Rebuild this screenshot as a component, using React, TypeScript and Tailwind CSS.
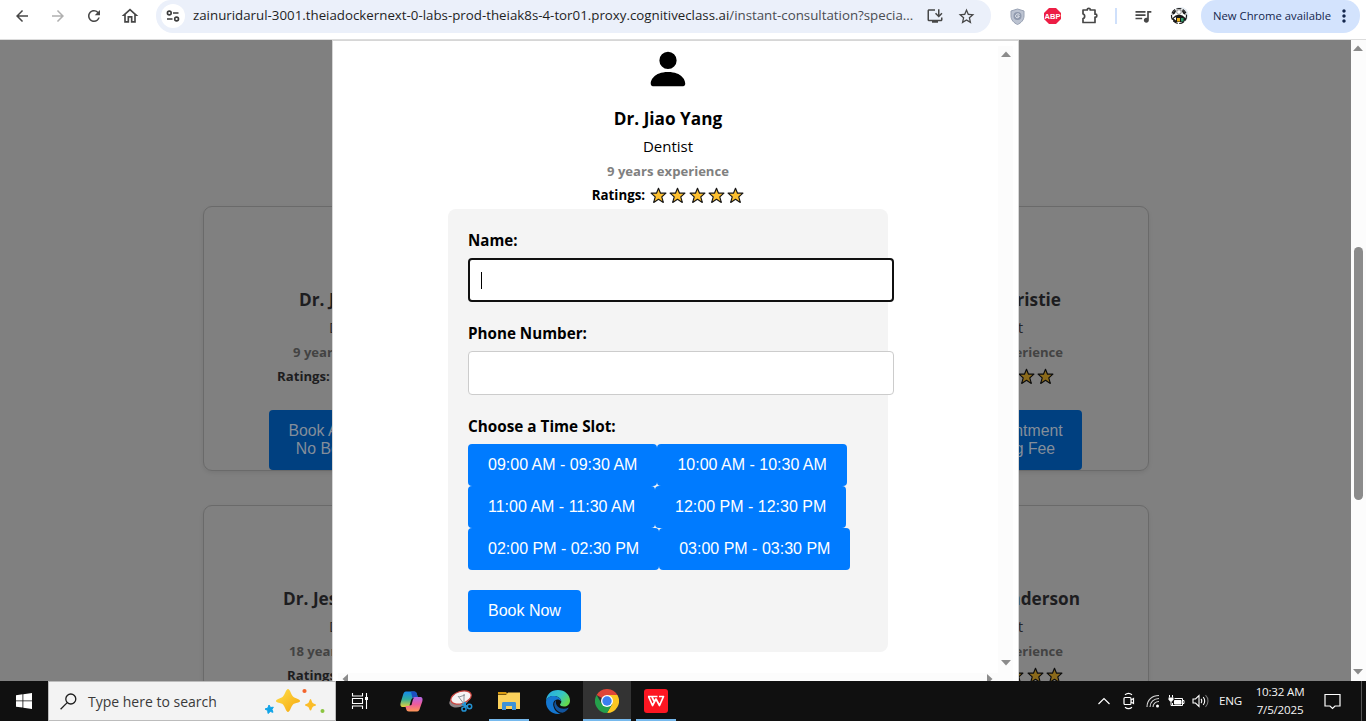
import React from 'react';
import {
  MdArrowBack,
  MdArrowForward,
  MdRefresh,
  MdOutlineHome,
  MdStarBorder,
  MdOutlineInstallDesktop,
  MdQueueMusic,
  MdMoreVert,
} from 'react-icons/md';
import { BsPersonFill } from 'react-icons/bs';

const Star = () => (
  <svg width="17" height="17" viewBox="0 0 16 16" className="block">
    <path
      d="M8 1.2 9.900 5.800h5.100l-3.900 3.500 1.400 5.200L8 11.600l-4.500 2.900 1.400-5.200L1 5.800h5.100z"
      fill="#fdc02f"
      stroke="#151515"
      strokeWidth="1.1"
      strokeLinejoin="round"
    />
  </svg>
);

const Stars = ({ count = 5 }: { count?: number }) => (
  <span className="flex gap-[2.3px]">
    {Array.from({ length: count }, (_, i) => (
      <Star key={i} />
    ))}
  </span>
);

const Arrow = ({ dir }: { dir: 'up' | 'down' | 'left' | 'right' }) => {
  const d = {
    up: 'M0 6 5 0.5 10 6z',
    down: 'M0 0 5 5.5 10 0z',
    left: 'M6 0 0.5 5 6 10z',
    right: 'M0 0 5.5 5 0 10z',
  }[dir];
  const tall = dir === 'left' || dir === 'right';
  return (
    <svg width={tall ? 6 : 10} height={tall ? 10 : 6} className="block shrink-0">
      <path d={d} fill="#8b8b8b" />
    </svg>
  );
};

const Toolbar = () => (
  <header className="flex h-10 shrink-0 items-start border-b border-[#dcdcdc] bg-white text-[#474747]">
    <div className="flex h-8 w-[156px] shrink-0 items-center pl-[13px]">
      <MdArrowBack size={18} />
      <MdArrowForward size={18} className="ml-[18px] text-[#b0b0b0]" />
      <MdRefresh size={18} className="ml-[18px]" />
      <MdOutlineHome size={20} className="ml-[17px]" />
    </div>
    <div className="flex h-[33px] w-[835px] shrink-0 items-center rounded-b-[17px] rounded-t-[15px] bg-[#ebf0fa] pb-px">
      <div className="ml-[5px] flex h-6 w-6 items-center justify-center rounded-full bg-white">
        <svg width="14" height="12" viewBox="0 0 14 12" fill="none" stroke="#3c3c3c" strokeWidth="1.6">
          <circle cx="3.3" cy="3" r="1.9" />
          <path d="M7 3h5.5M1 9h5.500" />
          <circle cx="10.600" cy="9" r="1.9" />
        </svg>
      </div>
      <span className="ml-2 w-[722px] whitespace-nowrap text-[13.300px] text-[#4a4d52]">
        <span className="text-[#1f1f1f]">zainuridarul-3001.theiadockernext-0-labs-prod-theiak8s-4-tor01.proxy.cognitiveclass.ai</span>
        /instant-consultation?specia...
      </span>
      <MdOutlineInstallDesktop size={18} className="ml-[11px]" />
      <MdStarBorder size={19} className="ml-[13px]" />
    </div>
    <div className="flex h-8 flex-1 items-center pl-[19px]">
      <svg width="15" height="17" viewBox="0 0 15 17" className="shrink-0">
        <path d="M7.500 1 14 3v5c0 4-3 7-6.500 8.500C4 15 1 12 1 8V3z" fill="#bcc3d1" stroke="#98a1b3" />
        <circle cx="7.500" cy="8" r="4" fill="#8f99ad" />
        <path d="M9.500 6.500c-2-1.500-4.500.2-3.800 2.200.8 1.800 3.600 1 3.500-.7H7.300" fill="none" stroke="#eef0f5" />
      </svg>
      <svg width="17" height="16" viewBox="0 0 17 16" className="ml-[19px] shrink-0">
        <path d="M5 0h7l5 5v6l-5 5H5l-5-5V5z" fill="#ed1e45" />
        <text x="8.500" y="11" textAnchor="middle" fontSize="7.500" fontWeight="700" fill="#fff" fontFamily="Liberation Sans, sans-serif">
          ABP
        </text>
      </svg>
      <svg width="18" height="18" viewBox="0 0 18 18" className="ml-5 shrink-0" fill="none" stroke="#474747" strokeWidth="1.7">
        <path d="M2 3h4.300V2.200c0-1 2.900-1 2.900 0V3H14v4.200h.7c1.500 0 1.500 3 0 3H14V15.500H2v-4c2.200-.2 2.200-4.300 0-4.500z" strokeLinejoin="round" />
      </svg>
      <span className="ml-[16px] h-4 w-0.5 shrink-0 bg-[#cfe0fb]" />
      <MdQueueMusic size={20} className="ml-[16px] shrink-0" />
      <svg width="20" height="18" viewBox="0 0 20 18" className="ml-[16px] shrink-0">
        <circle cx="11.500" cy="8" r="8" fill="#e6ecf2" />
        <circle cx="10" cy="9" r="7.500" fill="#fff" stroke="#1a1a1a" strokeWidth="1.200" strokeDasharray="5 1.500" />
        <path d="M4 5.500C5 4 6.500 3 7.500 3L6 6.500 3.500 8zM16 5.500C15 4 13.500 3 12.500 3L14 6.500 16.500 8z" fill="#191919" />
        <path d="M3 11.500 6.500 8.500 10 7.500l3.500 1 3.500 3-2 3.500H5z" fill="#191919" />
        <path d="M4.500 11.500 7 10v3.500z" fill="#fff" />
        <circle cx="10" cy="5" r="2.300" fill="#fff" stroke="#777" strokeWidth=".8" />
        <path d="M8 11h3v3.500H8z" fill="#f0b51e" />
        <path d="M12 11h2.500v3.500H12z" fill="#2f9e6b" />
      </svg>
      <div className="ml-[12px] flex h-[33px] w-[159px] shrink-0 items-center self-start rounded-b-[17px] rounded-t-[15px] bg-[#d3e3fd] pb-px pl-3 text-[#13264d]">
        <span className="w-[119px] whitespace-nowrap text-[11.300px]">New Chrome available</span>
        <MdMoreVert size={20} className="ml-[2px] shrink-0" />
      </div>
    </div>
  </header>
);

type Doctor = {
  name: string;
  experience: string;
  namePad: string;
  specPad: string;
  expPad: string;
};

const leftDoctors: Doctor[] = [
  { name: 'Dr. Jiao Yang', experience: '9 years experience', namePad: 'pl-[95px]', specPad: 'pl-[125px]', expPad: 'pl-[89px]' },
  { name: 'Dr. Jessica', experience: '18 years experience', namePad: 'pl-[79px]', specPad: 'pl-[125px]', expPad: 'pl-[85px]' },
];
const rightDoctors: Doctor[] = [
  { name: 'Christie', experience: 'experience', namePad: 'pr-[87px]', specPad: 'pr-[125px]', expPad: 'pr-[85px]' },
  { name: 'Anderson', experience: 'experience', namePad: 'pr-[68px]', specPad: 'pr-[125px]', expPad: 'pr-[85px]' },
];

const DoctorCard = ({
  doctor,
  side,
  ratingPad,
  bookable,
}: {
  doctor: Doctor;
  side: 'left' | 'right';
  ratingPad: string;
  bookable: boolean;
}) => (
  <article
    className={`flex h-[265px] w-[299px] flex-col whitespace-nowrap rounded-[9px] border border-[#6a6a6a] pt-[80px] shadow-[0_2px_4px_rgba(0,0,0,0.08)] ${
      side === 'left' ? 'items-start' : 'items-end'
    }`}
  >
    <h3 className={`h-[26px] text-[17.200px] font-bold leading-[26px] text-[#1d1d20] ${doctor.namePad}`}>{doctor.name}</h3>
    <p className={`h-[27px] text-[15px] leading-[28px] text-[#26262a] ${doctor.specPad}`}>Dentist</p>
    <p className={`h-6 text-[13.100px] font-bold leading-6 text-[#434343] ${doctor.expPad}`}>{doctor.experience}</p>
    <p className={`flex h-[25px] items-center gap-[5px] text-[13.200px] font-bold text-[#1d1d20] ${ratingPad}`}>
      {side === 'left' && 'Ratings:'}
      {side === 'right' && (
        <span className="brightness-[0.55]">
          <Stars count={3} />
        </span>
      )}
    </p>
    {bookable && (
      <div
        className={`mt-[21px] flex h-[60px] w-[167px] shrink-0 items-center justify-center rounded-[4px] bg-[#004080] text-center font-['Liberation_Sans',Arial,sans-serif] text-[15.800px] leading-[18px] text-[#848e9a] ${
          side === 'left' ? 'ml-[65px]' : 'mr-[66px]'
        }`}
      >
        Book Appointment
        <br />
        No Booking Fee
      </div>
    )}
  </article>
);

const PageBehind = () => (
  <div className="flex h-full">
    <div className="flex w-[1351px] justify-between overflow-hidden bg-[#808080] pl-[203px] pr-[202px] pt-[166px]">
      <div className="flex flex-col gap-[34px]">
        {leftDoctors.map((d, i) => (
          <DoctorCard key={d.name} doctor={d} side="left" bookable={i === 0} ratingPad={i ? 'pl-[83px]' : 'pl-[73px]'} />
        ))}
      </div>
      <div className="flex flex-col gap-[34px]">
        {rightDoctors.map((d, i) => (
          <DoctorCard key={d.name} doctor={d} side="right" bookable={i === 0} ratingPad={i ? 'pr-[85px]' : 'pr-[94px]'} />
        ))}
      </div>
    </div>
    <div className="flex w-[15px] flex-col items-start bg-[#fcfcfc] pl-[2px] pt-[5px]">
      <Arrow dir="up" />
      <div className="ml-px mt-[196px] h-[253px] w-[9px] rounded-full bg-[#8b8b8b]" />
      <div className="mt-[169px]">
        <Arrow dir="down" />
      </div>
    </div>
  </div>
);

const slots = [
  ['09:00 AM - 09:30 AM', '10:00 AM - 10:30 AM'],
  ['11:00 AM - 11:30 AM', '12:00 PM - 12:30 PM'],
  ['02:00 PM - 02:30 PM', '03:00 PM - 03:30 PM'],
];

const BlueButton = ({ children }: { children: React.ReactNode }) => (
  <button
    type="button"
    className="h-[42px] whitespace-nowrap rounded-[4px] bg-[#007bff] px-5 font-['Liberation_Sans',Arial,sans-serif] text-[16px] text-white"
  >
    {children}
  </button>
);

const BookingModal = () => (
  <section className="absolute left-[332px] top-0 flex h-[641px] w-[687px] flex-col border-x border-t border-[#d6d6d6] bg-white px-[5px] pt-[5px] text-black">
    <div className="flex min-h-0 flex-1">
      <div className="flex w-[660px] flex-col items-center">
        <BsPersonFill size={46} className="shrink-0" />
        <h2 className="mt-[14px] h-[26px] text-[17.200px] font-bold leading-[26px]">Dr. Jiao Yang</h2>
        <p className="h-[26px] text-[15px] leading-[28px]">Dentist</p>
        <p className="h-[25px] text-[13.100px] font-bold leading-[26px] text-[#808080]">9 years experience</p>
        <div className="flex h-6 items-center gap-[5px] text-[13.300px] font-bold">
          <span className="pt-px">Ratings:</span> <Stars />
        </div>
        <form className="mt-[2px] flex h-[443px] w-[440px] shrink-0 flex-col items-start rounded-[8px] bg-[#f4f4f4] px-5 pt-[20px]">
          <label className="h-[29px] text-[15.100px] font-bold leading-[22px]">Name:</label>
          <div className="flex h-11 w-[426px] shrink-0 items-center rounded-[4px] border-2 border-[#101010] bg-white pl-[11px]">
            <span className="h-[17px] w-px bg-black" />
          </div>
          <label className="mt-5 h-[29px] text-[15.200px] font-bold leading-[22px]">Phone Number:</label>
          <div className="h-11 w-[426px] shrink-0 rounded-[4px] border border-[#cccccc] bg-white" />
          <label className="mt-5 h-[29px] text-[15.300px] font-bold leading-[22px]">Choose a Time Slot:</label>
          <div className="flex flex-col">
            {slots.map(([a, b]) => (
              <div key={a} className="flex">
                <BlueButton>{a}</BlueButton>
                <BlueButton>{b}</BlueButton>
              </div>
            ))}
          </div>
          <div className="mt-5">
            <BlueButton>Book Now</BlueButton>
          </div>
        </form>
      </div>
      <div className="flex w-[15px] flex-col items-start justify-between bg-[#fcfcfc] pb-[7px] pl-[2.500px] pt-[5px]">
        <Arrow dir="up" />
        <Arrow dir="down" />
      </div>
    </div>
    <div className="flex h-2 shrink-0 items-start justify-between overflow-hidden bg-[#fcfcfc] pl-[4px] pr-[20px] pt-[1px]">
      <Arrow dir="left" />
      <Arrow dir="right" />
    </div>
  </section>
);

const Sparkles = () => (
  <svg width="62" height="28" viewBox="0 0 62 28" className="shrink-0">
    <defs>
      <linearGradient id="gold" x1="0" y1="0" x2="1" y2="1">
        <stop offset="0" stopColor="#ffe04a" />
        <stop offset="1" stopColor="#f5a60d" />
      </linearGradient>
    </defs>
    <path d="M24 2c2 0 3 5.500 5 7.500s7 2.500 7 4.500-5 1.500-7 3.500-3 7.500-5 7.500-3-5.500-5-7.500-7-1.500-7-3.500 5-2.500 7-4.500 3-7.500 5-7.500z" fill="url(#gold)" />
    <path d="M46.500 12c1 0 1.200 3 2.200 4s3.300.8 3.300 2-2.300.8-3.300 2-1.200 3.600-2.200 3.600-1.200-2.600-2.200-3.600-3.300-.8-3.300-2 2.300-1 3.300-2 1.200-4 2.200-4z" fill="#fbbd2a" />
    <path d="m5 18 1.500 2.500 2.800-.3L8 22.500l1 2.800-2.700-.8L4 26.500l-.3-3L1 22l2.900-1z" fill="#10a4e8" stroke="#10a4e8" strokeWidth="1" strokeLinejoin="round" />
    <circle cx="40.500" cy="4" r="2.100" fill="#f3642c" />
    <circle cx="58.500" cy="24" r="2" fill="#8bc540" />
  </svg>
);

const TaskIcons = () => (
  <nav className="flex h-full">
    <div className="flex w-[49px] items-center justify-center pb-px pr-px">
      <svg width="18" height="16" viewBox="0 0 18 16" fill="none" stroke="#fff" strokeWidth="1.100">
        <path d="M1.500 0v3h10V0M1.500 16v-3h10v3M1.500 5.500h10v5h-10zM15.500 0v16" />
        <rect x="14" y="4" width="3" height="3" fill="#fff" stroke="none" />
      </svg>
    </div>
    <div className="flex w-[52px] items-center justify-center">
      <svg width="23" height="21" viewBox="0 0 23 21">
        <defs>
          <linearGradient id="cpa" x1="0" y1="0" x2="0" y2="1">
            <stop offset="0" stopColor="#1389ee" />
            <stop offset=".5" stopColor="#31ad9a" />
            <stop offset="1" stopColor="#e6d13b" />
          </linearGradient>
          <linearGradient id="cpb" x1="0" y1="0" x2="0" y2="1">
            <stop offset="0" stopColor="#b169e8" />
            <stop offset=".5" stopColor="#ee5b9c" />
            <stop offset="1" stopColor="#ff9856" />
          </linearGradient>
        </defs>
        <path d="M6 .5h8c2 0 2.500 1 3 3l.7 2.500H15c-2 0-2.500 1-3 3l-1.300 4.500c-.5 2-1.500 2.500-3 2.500H3c-2.500 0-3-2-2.300-4.500L3 4C3.600 1.700 4.300.5 6 .5z" fill="url(#cpa)" />
        <path d="M11 .5h3c2 0 2.500 1 3 3l.7 2.500H15c-1.500 0-2 .5-2.500 1.500z" fill="#1c4fc0" />
        <path d="M17 20.500H9c-2 0-2.500-1-3-3L5.300 15H8c2 0 2.500-1 3-3l1.300-3.500C12.800 6.500 13.800 6 15.300 6H20c2.500 0 3 2 2.300 4.500L20 17c-.6 2.300-1.300 3.500-3 3.500z" fill="url(#cpb)" />
        <path d="M9.500 14.500 11 9.500c.5-1.700 1.500-2.700 3.500-2.700-1.500.5-1.500 2-3 7.200z" fill="#101010" />
      </svg>
    </div>
    <div className="flex w-[47px] items-center justify-center">
      <svg width="24" height="22" viewBox="0 0 24 22">
        <ellipse cx="10" cy="11" rx="10" ry="6" fill="#8f8587" transform="rotate(-18 10 11)" />
        <ellipse cx="12" cy="7.500" rx="10.500" ry="6" fill="#f6f4f4" stroke="#cf4640" strokeWidth="1.200" transform="rotate(-18 12 7.500)" />
        <path d="m9 6 6 8M15 4v10M10 7l6-2" stroke="#8e9398" strokeWidth="1" />
        <path d="m13 14 5 2.500M16 12v5" stroke="#2392d2" strokeWidth="2" />
        <circle cx="20.500" cy="16.500" r="2.200" fill="none" stroke="#2392d2" strokeWidth="1.500" />
        <circle cx="15" cy="19" r="2.100" fill="none" stroke="#2392d2" strokeWidth="1.500" />
      </svg>
    </div>
    <div className="flex w-[50px] flex-col items-center">
      <div className="flex flex-1 items-center">
        <svg width="22" height="18" viewBox="0 0 22 18" className="mt-[2px]">
          <path d="M0 0h8l2 2.500H0z" fill="#d99b11" />
          <path d="M0 3h8l2-2.500h12V17H0z" fill="#fbd15b" />
          <path d="M4 18v-6.500c0-1 .5-1.500 1.500-1.500h11c1 0 1.500.5 1.500 1.500V18h-4v-4H8v4z" fill="#3f92d6" />
        </svg>
      </div>
      <span className="h-0.5 w-10 bg-[#76b9ed]" />
    </div>
    <div className="flex w-[49px] items-center justify-center pr-[2px] pt-px">
      <svg width="24" height="24" viewBox="0 0 24 24">
        <defs>
          <linearGradient id="eg" x1="0" y1="0" x2="1" y2=".6">
            <stop offset="0" stopColor="#25a6e8" />
            <stop offset=".6" stopColor="#35c6c4" />
            <stop offset="1" stopColor="#64d94c" />
          </linearGradient>
        </defs>
        <path d="M0 12C0 4.500 5 0 12 0c7 0 12 5 12 10.500 0 4-3 6-6 6-2.500 0-4-1-4-2 0-.8 1.300-1 1.300-3C15.300 8.500 12 6 8 6 3 6 0 9 0 12z" fill="url(#eg)" />
        <path d="M0 12c0-3.500 3.500-6 7.500-6 4.500 0 7.800 2.500 7.800 5.500-1-1.500-2.500-2-4-2-3 0-4.500 3-4 6 .7 4.500 4 7.500 7.500 8.100C7 25.500 0 19.500 0 12z" fill="#1477d1" />
        <path d="M10 10c-4 4-1 12 6.500 12.800 3-.8 5-2.800 6.300-5.300C17 20.500 8.500 18 10 10z" fill="#12549d" />
      </svg>
    </div>
    <div className="flex w-12 flex-col items-center bg-[#333333]">
      <div className="flex flex-1 items-center pt-0.5">
        <svg width="24" height="24" viewBox="0 0 24 24">
          <path d="M12 12 1.600 6A12 12 0 0 1 22.400 6z" fill="#e04638" />
          <path d="M12 12V6h10.400A12 12 0 0 1 12 24l5.200-9z" fill="#fdc721" />
          <path d="M12 12l5.200 3L12 24A12 12 0 0 1 1.600 6l5.200 9z" fill="#25a04b" />
          <circle cx="12" cy="12" r="6" fill="#fff" />
          <circle cx="12" cy="12" r="4.700" fill="#3a7ff0" />
        </svg>
      </div>
      <span className="h-0.5 w-full bg-[#76b9ed]" />
    </div>
    <div className="ml-[5px] flex w-10 flex-col items-center">
      <div className="flex flex-1 items-center pt-0.5">
        <svg width="24" height="24" viewBox="0 0 24 24">
          <rect width="24" height="24" rx="3" fill="#fd1622" />
          <path d="M4 7.500h9.500M4.500 7.500l4 9 3.500-6.500 3.500 6.500L19.500 7.500H15M8 8l2 4" fill="none" stroke="#fff" strokeWidth="1.700" strokeLinejoin="round" />
        </svg>
      </div>
      <span className="h-0.5 w-full bg-[#76b9ed]" />
    </div>
  </nav>
);

const Tray = () => (
  <div className="ml-auto flex h-full items-center text-[#f4f4f4]">
    <svg width="12" height="8" viewBox="0 0 12 8" fill="none" stroke="#fff" strokeWidth="1.200">
      <path d="m.5 7 5.500-5.500L11.500 7" />
    </svg>
    <svg width="12" height="18" viewBox="0 0 12 18" className="ml-[13px]" fill="none" stroke="#fff" strokeWidth="1.200">
      <rect x="1" y="5.500" width="7" height="7" rx="1" />
      <path d="M8 8l2.500-1.500v5L8 10M2 2.800c2-1.600 5-1.600 7 0M2 15.200c2 1.600 5 1.600 7 0" />
    </svg>
    <svg width="14" height="14" viewBox="0 0 14 14" className="ml-[11px]" fill="none" stroke="#d8d8d8" strokeWidth="1.100">
      <path d="M1 13C1 6 6 1.500 13 1.500M4 13c0-5 4-8.500 9-8.500M7 13c0-3 2.500-5.500 6-5.500" />
      <circle cx="11.500" cy="12" r="1.500" fill="#fff" stroke="none" />
    </svg>
    <svg width="17" height="13" viewBox="0 0 17 13" className="ml-[8px]" fill="none" stroke="#fff" strokeWidth="1">
      <path d="M6.500 3.500h8v7h-10V8M14.500 5.500H16v3h-1.500M1.500 0v2.500M4.500 0v2.500M3 6v4.500h2" />
      <path d="M.5 2.500h5v2L4 6.500H2L.5 4.500z" fill="#fff" stroke="none" />
      <path d="M6.500 5.500h6.500v3.500H6.500z" fill="#fff" />
    </svg>
    <svg width="17" height="14" viewBox="0 0 17 14" className="ml-[7px]" fill="none" stroke="#fff" strokeWidth="1.100">
      <path d="M1 5h2.500L7 1.500v11L3.500 9H1zM9 5c1 1 1 3 0 4M11.200 3.200c2 2 2 5.600 0 7.600" />
      <path d="M13.500 1.200c3.300 3 3.300 8.600 0 11.600" stroke="#777" />
    </svg>
    <span className="ml-[10px] w-[24px] whitespace-nowrap text-[11.600px] tracking-[-0.2px]">ENG</span>
    <div className="ml-[8px] flex w-[58px] flex-col items-center whitespace-nowrap text-[11.600px] leading-[18px] tracking-[-0.2px]">
      <span>10:32 AM</span>
      <span>7/5/2025</span>
    </div>
    <svg width="17" height="17" viewBox="0 0 17 17" className="ml-[15px] mr-[20px]" fill="none" stroke="#fff" strokeWidth="1.200">
      <path d="M1 1.500h15v11.500h-5l-2.500 2.500L6 13H1z" />
    </svg>
    <span className="mr-[4px] h-full w-px bg-[#555]" />
  </div>
);

const Taskbar = () => (
  <footer className="flex h-10 shrink-0 bg-[#101010]">
    <div className="flex w-12 items-center justify-center">
      <svg width="16" height="16" viewBox="0 0 16 16" fill="#fff">
        <path d="M0 2.200 6.500 1.300v6.200H0zM7.300 1.200 16 0v7.500H7.300zM0 8.300h6.500v6.300L0 13.700zM7.300 8.300H16V16l-8.700-1.200z" />
      </svg>
    </div>
    <div className="flex w-[288px] items-center border border-[#bcbcbc] bg-[#f3f3f3] pl-[11px]">
      <svg width="17" height="17" viewBox="0 0 17 17" fill="none" stroke="#1d1d1d" strokeWidth="1.300">
        <circle cx="10.800" cy="6" r="5" />
        <path d="M7.200 9.600.6 16.200" />
      </svg>
      <span className="ml-[11px] w-[176px] whitespace-nowrap pt-px text-[14px] text-[#3a3a3a]">Type here to search</span>
      <Sparkles />
    </div>
    <TaskIcons />
    <Tray />
  </footer>
);

export default function App() {
  return (
    <div className="flex h-[721px] w-[1366px] flex-col overflow-hidden bg-white font-['Open_Sans','Noto_Sans',sans-serif]">
      <Toolbar />
      <main className="relative h-[641px] shrink-0 overflow-hidden">
        <PageBehind />
        <BookingModal />
      </main>
      <Taskbar />
    </div>
  );
}
